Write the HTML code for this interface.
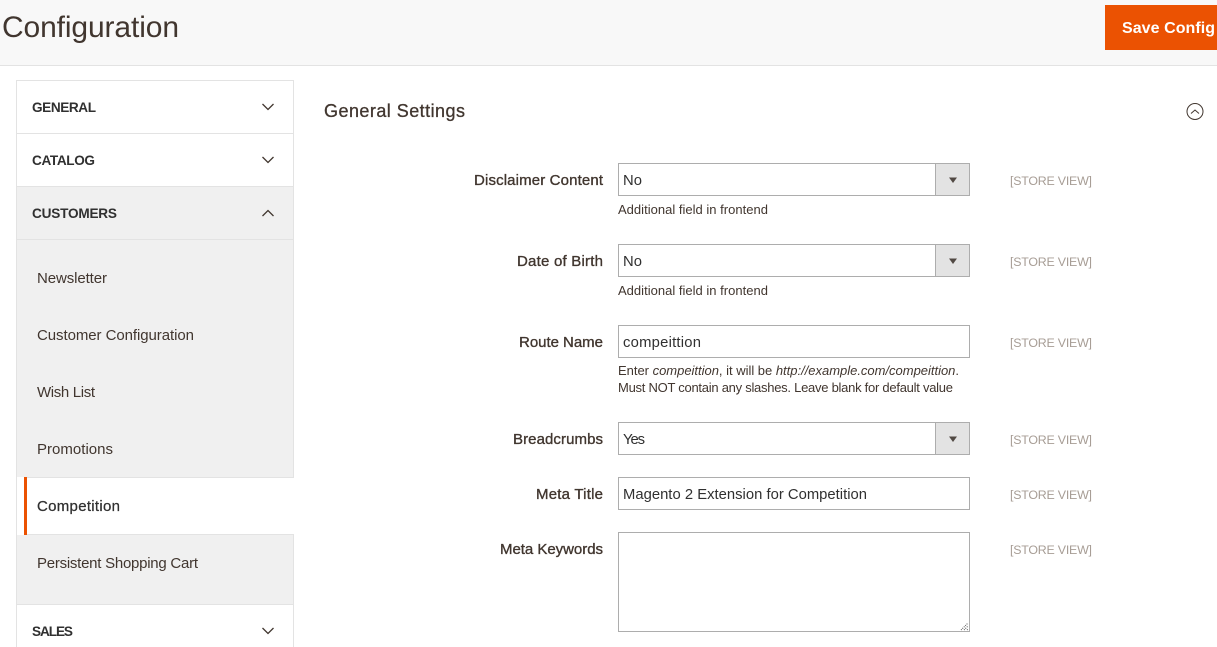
<!DOCTYPE html>
<html><head><meta charset="utf-8"><style>
html,body{margin:0;padding:0;background:#fff;width:1217px;height:647px;overflow:hidden}
svg{display:block}
text{font-family:"Liberation Sans",sans-serif;fill:#41362f;font-size:15px}
.b{font-weight:700;font-size:13.600px;fill:#303030}
.n{fill:#41362f}
.l{font-size:15px;fill:#41362f;stroke:#41362f;stroke-width:.35}
.h{font-size:13px;fill:#41362f}
.s{font-size:12.400px;fill:#a79d95}
.v{fill:#303030;font-size:14.800px}
</style></head><body>
<svg width="1217" height="647" viewBox="0 0 1217 647" xmlns="http://www.w3.org/2000/svg">
<rect width="1217" height="65" fill="#f8f8f8"/><rect y="65" width="1217" height="1" fill="#e3e3e3"/>
<text x="2" y="37" style="font-size:30px" textLength="177">Configuration</text>
<rect x="1105" y="5" width="112" height="45" fill="#eb5202"/>
<text x="1122" y="33" style="font-size:16px;font-weight:700;fill:#fff" textLength="93">Save Config</text>

<!-- sidebar -->
<rect x="16.500" y="80.500" width="277" height="580" fill="#fff" stroke="#e3e3e3"/>
<rect x="17" y="187" width="276" height="290" fill="#f0f0f0"/>
<rect x="17" y="535" width="276" height="69" fill="#f0f0f0"/>
<rect x="17" y="133" width="276" height="1" fill="#e3e3e3"/>
<rect x="17" y="186" width="276" height="1" fill="#e3e3e3"/>
<rect x="17" y="239" width="276" height="1" fill="#e3e3e3"/>
<rect x="17" y="604" width="276" height="1" fill="#e3e3e3"/>
<rect x="24" y="477" width="270" height="58" fill="#fff"/>
<rect x="24" y="477" width="270" height="1" fill="#e3e3e3"/>
<rect x="24" y="534" width="270" height="1" fill="#e3e3e3"/>
<rect x="24" y="477" width="3" height="58" fill="#eb5202"/>
<text class="b" x="32" y="112" textLength="64">GENERAL</text>
<text class="b" x="32" y="165" textLength="63">CATALOG</text>
<text class="b" x="32" y="218" textLength="85">CUSTOMERS</text>
<text class="b" x="32" y="636" textLength="41">SALES</text>
<g fill="none" stroke="#41362f" stroke-width="1.3">
<path d="M262.500 104l5.500 5.500 5.500-5.500"/><path d="M262.500 157l5.500 5.500 5.500-5.500"/><path d="M262.500 216l5.500-5.500 5.500 5.500"/><path d="M262.500 628l5.500 5.500 5.500-5.500"/>
</g>
<text class="n" x="37" y="283" textLength="70">Newsletter</text>
<text class="n" x="37" y="340" textLength="157">Customer Configuration</text>
<text class="n" x="37" y="397" textLength="58">Wish List</text>
<text class="n" x="37" y="454" textLength="76">Promotions</text>
<text x="37" y="511" textLength="83" style="fill:#303030;stroke:#303030;stroke-width:.25">Competition</text>
<text class="n" x="37" y="568" textLength="161">Persistent Shopping Cart</text>

<!-- section head -->
<text x="324" y="117" style="font-size:18px;fill:#41362f;stroke:#41362f;stroke-width:.3" textLength="141">General Settings</text>
<circle cx="1195" cy="111.500" r="8" fill="none" stroke="#41362f" stroke-width="1"/>
<path d="M1191 113.500l4-3.500 4 3.500" fill="none" stroke="#41362f" stroke-width="1"/>

<!-- labels -->
<text class="l" x="474" y="185" textLength="129">Disclaimer Content</text>
<text class="l" x="517" y="266" textLength="86">Date of Birth</text>
<text class="l" x="519" y="347" textLength="84">Route Name</text>
<text class="l" x="513" y="444" textLength="90">Breadcrumbs</text>
<text class="l" x="536" y="499" textLength="67">Meta Title</text>
<text class="l" x="500" y="554" textLength="103">Meta Keywords</text>

<!-- controls -->
<g fill="#fff" stroke="#adadad">
<rect x="618.500" y="163.500" width="351" height="32"/>
<rect x="618.500" y="244.500" width="351" height="32"/>
<rect x="618.500" y="325.500" width="351" height="32"/>
<rect x="618.500" y="422.500" width="351" height="32"/>
<rect x="618.500" y="477.500" width="351" height="32"/>
<rect x="618.500" y="532.500" width="351" height="99"/>
<rect x="935.500" y="163.500" width="34" height="32" fill="#e3e3e3"/>
<rect x="935.500" y="244.500" width="34" height="32" fill="#e3e3e3"/>
<rect x="935.500" y="422.500" width="34" height="32" fill="#e3e3e3"/>
</g>
<g fill="#514943">
<path d="M949 177.500h8l-4 5.500z"/><path d="M949 258.500h8l-4 5.500z"/><path d="M949 436.500h8l-4 5.500z"/>
</g>
<path d="M961 630l7-7M964 630l4-4M967 630l1-1" stroke="#555" stroke-width="1" stroke-dasharray="1 1" fill="none"/>

<text class="v" x="623" y="185" textLength="19">No</text>
<text class="v" x="623" y="266" textLength="19">No</text>
<text class="v" x="623" y="347" textLength="78">compeittion</text>
<text class="v" x="623" y="444" textLength="22">Yes</text>
<text class="v" x="623" y="499" textLength="244">Magento 2 Extension for Competition</text>

<!-- hints -->
<text class="h" x="618" y="214" textLength="150">Additional field in frontend</text>
<text class="h" x="618" y="295" textLength="150">Additional field in frontend</text>
<text class="h" x="618" y="375" textLength="341">Enter <tspan font-style="italic">compeittion</tspan>, it will be <tspan font-style="italic">http://example.com/compeittion</tspan>.</text>
<text class="h" x="618" y="392" textLength="335">Must NOT contain any slashes. Leave blank for default value</text>

<!-- scope -->
<text class="s" x="1010" y="185" textLength="82">[STORE VIEW]</text>
<text class="s" x="1010" y="266" textLength="82">[STORE VIEW]</text>
<text class="s" x="1010" y="347" textLength="82">[STORE VIEW]</text>
<text class="s" x="1010" y="444" textLength="82">[STORE VIEW]</text>
<text class="s" x="1010" y="499" textLength="82">[STORE VIEW]</text>
<text class="s" x="1010" y="554" textLength="82">[STORE VIEW]</text>
</svg>
</body></html>
